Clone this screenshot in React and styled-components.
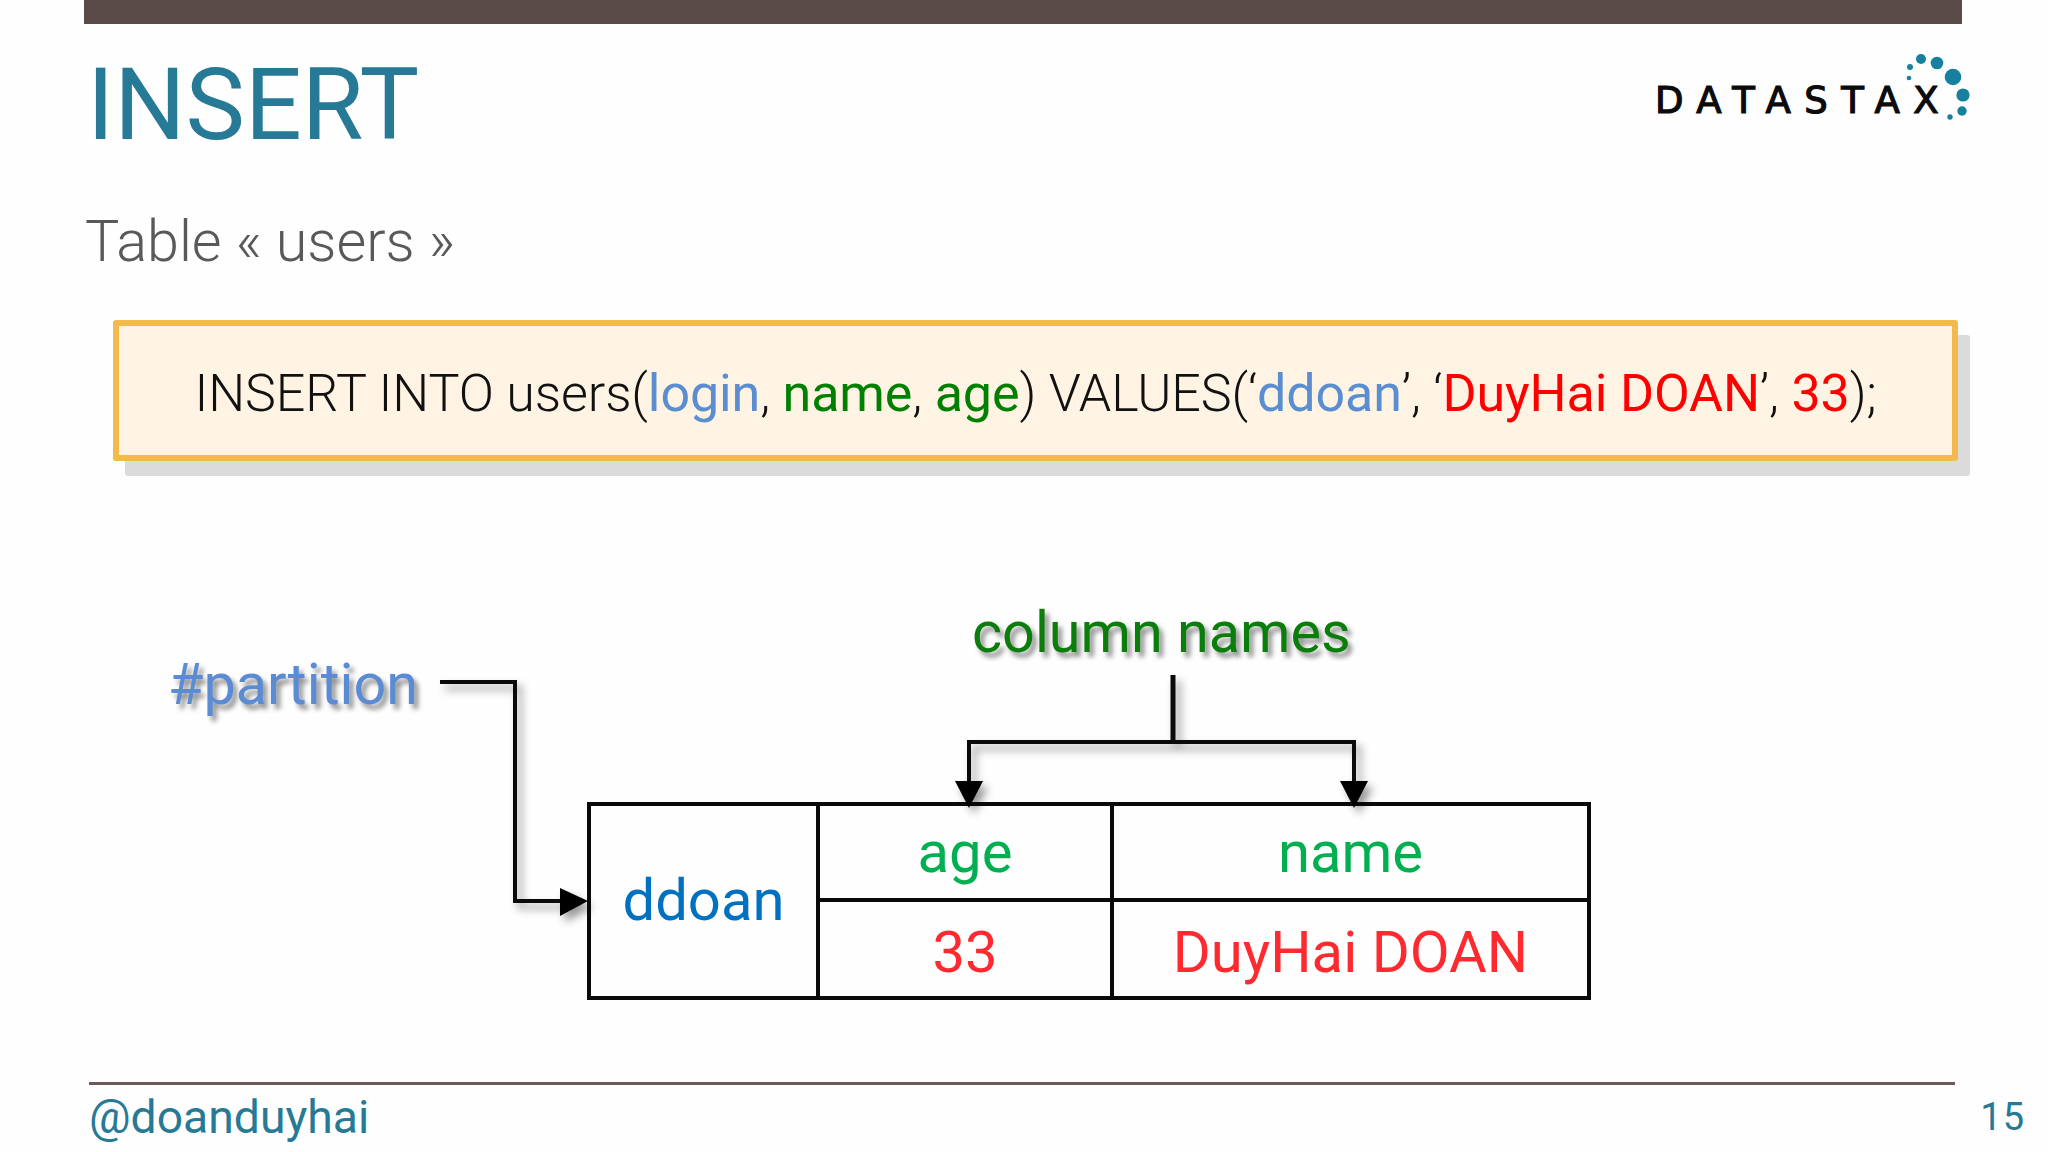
import styled, { createGlobalStyle } from 'styled-components';

const GlobalStyle = createGlobalStyle`
  html, body {
    margin: 0;
    padding: 0;
    background: #fefefe;
  }
`;

const teal = '#267a96';
const rowBorder = '4px solid #0a0a0a';

const Page = styled.div`
  width: 2048px;
  height: 1152px;
  overflow: hidden;
  display: flex;
  flex-direction: column;
  background: #fefefe;
  font-family: Roboto, 'Liberation Sans', sans-serif;
`;

const TopBar = styled.div`
  flex: none;
  height: 24px;
  margin: 0 86px 0 84px;
  background: #5a4b48;
`;

const Header = styled.header`
  flex: none;
  height: 130px;
  display: flex;
  justify-content: space-between;
  padding: 0 0 0 87px;
`;

const Title = styled.h1`
  margin: 0;
  padding-top: 27px;
  font-size: 100px;
  line-height: 108px;
  font-weight: 400;
  color: ${teal};
`;

const Logo = styled.div`
  position: relative;
  width: 320px;
  height: 100px;
  margin-right: 88px;
`;

const LogoWord = styled.span`
  position: absolute;
  left: 15px;
  top: 58px;
  font-family: 'DejaVu Sans', sans-serif;
  font-size: 37px;
  line-height: 37px;
  letter-spacing: 13.5px;
  -webkit-text-stroke: 1.2px #0b0b0b;
  color: #0b0b0b;
`;

const LogoDots = styled.svg`
  position: absolute;
  left: 0;
  top: 0;
`;

const Subtitle = styled.h2`
  flex: none;
  margin: 0;
  height: 166px;
  padding: 53px 0 0 85px;
  box-sizing: border-box;
  font-size: 57.5px;
  line-height: 70px;
  font-weight: 300;
  color: #595959;
`;

const QueryBox = styled.div`
  flex: none;
  width: 1845px;
  height: 141px;
  margin-left: 113px;
  padding-top: 6px;
  box-sizing: border-box;
  display: flex;
  align-items: center;
  justify-content: center;
  border: 6px solid #f4b94c;
  border-radius: 3px;
  background: #fff4e3;
  box-shadow: 12px 15px 0 #dcdbdc;
  font-size: 52px;
  font-weight: 300;
  letter-spacing: -0.12px;
  color: #111;
  white-space: pre;
`;

const Token = styled.span`
  font-weight: 400;
  color: ${(p) => p.$color};
`;

const Diagram = styled.section`
  position: relative;
  flex: 1;
  margin-top: 140px;
  padding: 201px 0 0 587px;
`;

const Label = styled.span`
  position: absolute;
  left: ${(p) => p.$left}px;
  top: ${(p) => p.$top}px;
  font-size: 57.5px;
  line-height: 68px;
  color: ${(p) => p.$color};
  text-shadow: 4px 5px 5px rgba(0, 0, 0, 0.45);
`;

const Connectors = styled.svg`
  position: absolute;
  left: 0;
  top: 0;
  filter: drop-shadow(5px 6px 4px rgba(0, 0, 0, 0.4));
`;

const Table = styled.div`
  width: 1004px;
  height: 198px;
  box-sizing: border-box;
  display: grid;
  grid-template-columns: 229px 294px 1fr;
  grid-template-rows: 96px 1fr;
  border: ${rowBorder};
  background: #fefefe;
`;

const Cell = styled.div`
  display: flex;
  align-items: center;
  justify-content: center;
  padding-top: ${(p) => p.$shift || 0}px;
  font-size: 58px;
  color: ${(p) => p.$color};
  border-right: ${(p) => (p.$last ? 'none' : rowBorder)};
  border-bottom: ${(p) => (p.$head ? rowBorder : 'none')};
`;

const KeyCell = styled(Cell)`
  grid-row: span 2;
  padding-bottom: 2px;
`;

const Footer = styled.footer`
  flex: none;
  height: 70px;
  margin-left: 89px;
  display: flex;
  flex-direction: column;
`;

const FooterRule = styled.div`
  height: 3px;
  width: 1866px;
  background: #6b5a58;
`;

const FooterRow = styled.div`
  display: flex;
  justify-content: space-between;
  align-items: center;
  width: 1936px;
  height: 63px;
  color: ${teal};
`;

const Handle = styled.span`
  font-size: 46.3px;
  line-height: 62px;
`;

const PageNumber = styled.span`
  font-size: 38px;
  letter-spacing: 1px;
`;

// logo dots, in logo coordinates
const dots = [
  [281, 35, 5],
  [297, 39, 6.3],
  [313, 53, 8.3],
  [323, 71, 6.6],
  [322, 87, 4.7],
  [310, 93, 2.7],
  [270, 43, 3],
  [269, 54, 2.3],
];

export default function App() {
  return (
    <Page>
      <GlobalStyle />
      <TopBar />
      <Header>
        <Title>INSERT</Title>
        <Logo>
          <LogoWord>DATASTAX</LogoWord>
          <LogoDots width="340" height="110" viewBox="0 0 340 110">
            {dots.map(([x, y, r]) => (
              <circle key={x + '-' + y} cx={x} cy={y} r={r} fill="#17809f" />
            ))}
          </LogoDots>
        </Logo>
      </Header>
      <Subtitle>Table « users »</Subtitle>
      <QueryBox>
        INSERT INTO users(<Token $color="#5a8ed0">login</Token>, <Token $color="#008000">name</Token>,{' '}
        <Token $color="#008000">age</Token>) VALUES(‘<Token $color="#5a8ed0">ddoan</Token>’, ‘
        <Token $color="#ff0000">DuyHai DOAN</Token>’, <Token $color="#ff0000">33</Token>);
      </QueryBox>
      <Diagram>
        <Label $left={168} $top={50} $color="#5a8bd3">#partition</Label>
        <Label $left={972} $top={-2} $color="#0a7d0a">column names</Label>
        <Table>
          <KeyCell $color="#0070c0">ddoan</KeyCell>
          <Cell $head $color="#00b050">age</Cell>
          <Cell $head $last $color="#00b050">name</Cell>
          <Cell $shift={6} $color="#ff2a2f">33</Cell>
          <Cell $shift={6} $last $color="#ff2a2f">DuyHai DOAN</Cell>
        </Table>
        <Connectors width="2048" height="482" viewBox="0 0 2048 482">
          <g fill="none" stroke="#0a0a0a" strokeWidth="4">
            <path d="M440 81H515V300H562" />
            <path d="M1173 74V141" strokeWidth="5" />
            <path d="M969 180V141H1354V180" />
          </g>
          <path d="M560 287L588 300L560 315Z" fill="#000" />
          <path d="M955 180H983L969 207Z" fill="#000" />
          <path d="M1340 180H1368L1354 207Z" fill="#000" />
        </Connectors>
      </Diagram>
      <Footer>
        <FooterRule />
        <FooterRow>
          <Handle>@doanduyhai</Handle>
          <PageNumber>15</PageNumber>
        </FooterRow>
      </Footer>
    </Page>
  );
}
